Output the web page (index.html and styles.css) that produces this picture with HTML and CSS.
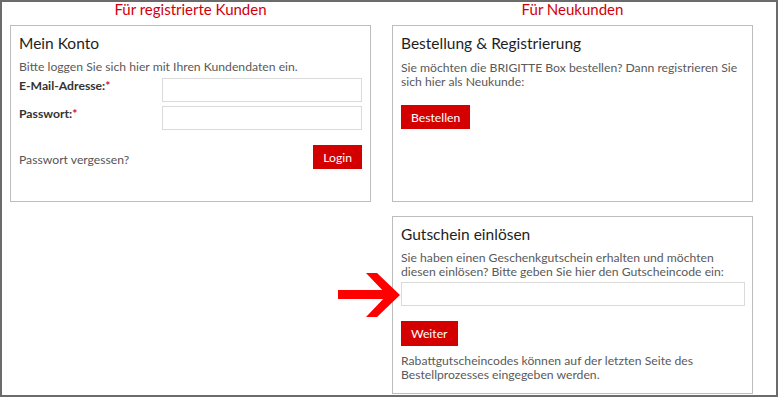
FILE: index.html
```html
<!DOCTYPE html>
<html>
<head>
    <title>Kundenkonto</title>
    <link rel="stylesheet" href="styles.css">
</head>
<body>
    <div class="frame">
        <div class="col">
            <h2 class="col-title">Für registrierte Kunden</h2>
            <div class="box box-login">
                <h3>Mein Konto</h3>
                <p class="intro">Bitte loggen Sie sich hier mit Ihren Kundendaten ein.</p>
                <div class="form-row">
                    <label>E-Mail-Adresse:<span class="req">*</span></label>
                    <input type="text">
                </div>
                <div class="form-row">
                    <label>Passwort:<span class="req">*</span></label>
                    <input type="password">
                </div>
                <div class="login-row">
                    <a href="#" class="forgot">Passwort vergessen?</a>
                    <button class="btn">Login</button>
                </div>
            </div>
        </div>

        <div class="col">
            <h2 class="col-title">Für Neukunden</h2>
            <div class="box box-new">
                <h3>Bestellung &amp; Registrierung</h3>
                <p>Sie möchten die BRIGITTE Box bestellen? Dann registrieren Sie<br>sich hier als Neukunde:</p>
                <button class="btn btn-order">Bestellen</button>
            </div>

            <div class="box box-voucher">
                <h3>Gutschein einlösen</h3>
                <p>Sie haben einen Geschenkgutschein erhalten und möchten<br>diesen einlösen? Bitte geben Sie hier den Gutscheincode ein:</p>
                <div class="voucher-field">
                    <svg class="arrow" width="62" height="46" viewBox="0 0 62 46">
                        <rect x="0" y="17" width="50" height="9" fill="#ff0000"/>
                        <polygon points="28,0 39,0 62,22 39,44 28,44 49,22" fill="#ff0000"/>
                    </svg>
                    <input type="text">
                </div>
                <button class="btn">Weiter</button>
                <p class="note">Rabattgutscheincodes können auf der letzten Seite des<br>Bestellprozesses eingegeben werden.</p>
            </div>
        </div>
    </div>
</body>
</html>
```

FILE: styles.css
```css
body {
    margin: 0;
    font-family: Lato, "Open Sans", Arial, sans-serif;
    color: #555;
    background: #fff;
}

.frame {
    box-sizing: border-box;
    width: 778px;
    height: 397px;
    border: 2px solid #6b6b6b;
    padding: 0 8px;
    display: grid;
    grid-template-columns: 361px 361px;
    column-gap: 21px;
    align-items: start;
}

.col-title {
    margin: 0;
    height: 23px;
    line-height: 14px;
    font-size: 15px;
    font-weight: normal;
    text-align: center;
    color: #d0000a;
}

.box {
    border: 1px solid #bdbdbd;
    padding: 0 8px;
    position: relative;
}

.box h3 {
    margin: 8px 0 0;
    font-size: 15.5px;
    font-weight: normal;
    line-height: 18px;
    color: #1e1e1e;
}

.box p {
    margin: 0;
    font-size: 12.2px;
    line-height: 14px;
    color: #5a5a5a;
}

.box-login {
    height: 175px;
}

.box-login .intro {
    margin-top: 8px;
}

.form-row {
    display: flex;
    justify-content: space-between;
    margin-top: 4px;
}

.form-row + .form-row {
    margin-top: 4px;
}

.form-row label {
    font-size: 12.2px;
    font-weight: bold;
    color: #333;
    line-height: 14px;
    padding-top: 1px;
}

.req {
    color: #c8102e;
}

input {
    box-sizing: border-box;
    width: 200px;
    height: 24px;
    border: 1px solid #dadada;
    margin: 0;
    padding: 0 6px;
    font: inherit;
}

.login-row {
    display: flex;
    justify-content: space-between;
    align-items: center;
    margin-top: 15px;
}

.forgot {
    font-size: 12.2px;
    color: #555;
    text-decoration: none;
    padding-top: 4px;
}

.btn {
    box-sizing: border-box;
    height: 24px;
    padding: 0 10px;
    border: none;
    background: #d40000;
    color: #fff;
    font-family: inherit;
    font-size: 12.2px;
    cursor: pointer;
}

.box-new {
    height: 175px;
}

.box-new p {
    margin-top: 9px;
}

.btn-order {
    margin-top: 16px;
}

.box-voucher {
    margin-top: 14px;
    height: 176px;
}

.box-voucher p {
    margin-top: 8px;
}

.voucher-field {
    margin-top: 3px;
}

.voucher-field input {
    width: 344px;
}

.arrow {
    position: absolute;
    left: -55px;
    top: 56px;
}

.box-voucher .btn {
    margin-top: 15px;
    height: 25px;
}

.box-voucher .note {
    margin-top: 8px;
}
```
